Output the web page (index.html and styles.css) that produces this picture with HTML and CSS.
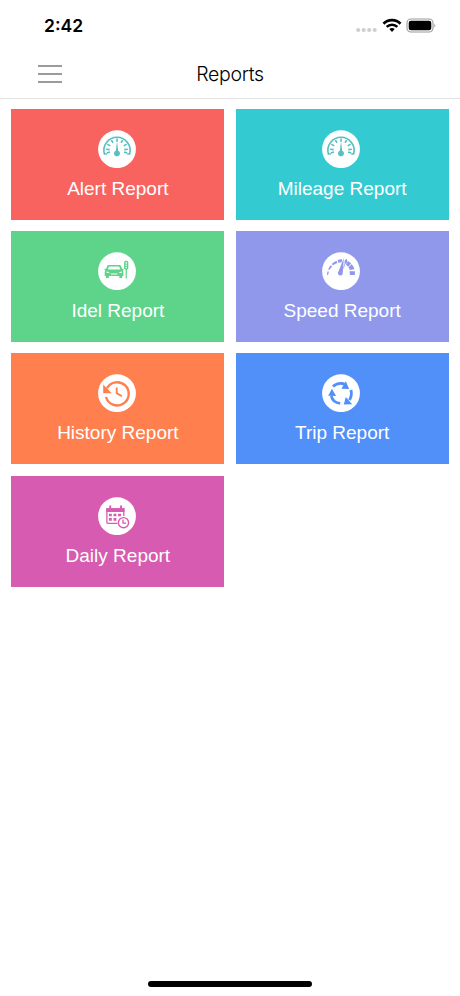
FILE: index.html
```
<!doctype html>
<html lang="en">
  <head>
    <meta charset="utf-8">
    <title>Reports</title>
    <link rel="stylesheet" href="styles.css">
  </head>
  <body>
    <div class="status_bar">
      <span class="time">2:42</span>
      <svg class="status_icons" width="82" height="18" viewBox="0 0 82 18">
        <g fill="#cfcfcf">
          <circle cx="3.2" cy="13" r="2.1"/>
          <circle cx="8.7" cy="13" r="2.1"/>
          <circle cx="14.2" cy="13" r="2.1"/>
          <circle cx="19.7" cy="13" r="2.1"/>
        </g>
        <g fill="none" stroke="#000" stroke-width="2.7">
          <path d="M28.5 6.7a12 12 0 0 1 17 0"/>
          <path d="M31.7 9.9a7.6 7.6 0 0 1 10.6 0"/>
        </g>
        <path d="M34.3 12.1q2.7-2 5.4 0L37 14.9z"/>
        <rect x="52" y="2" width="26" height="13" rx="4" fill="#fff" stroke="#999" stroke-width="1.1"/>
        <rect x="53.7" y="3.8" width="22.6" height="9.5" rx="2.3"/>
        <path d="M79.4 6.5q1.8 2 0 4z" fill="#999"/>
      </svg>
    </div>

    <header class="nav_bar">
      <button class="menu" aria-label="Menu"><i></i><i></i><i></i></button>
      <h1>Reports</h1>
    </header>

    <main class="reports">
      <a class="report alert">
        <svg class="icon" viewBox="6 6 38 38">
          <circle cx="25" cy="25.2" r="18.9" fill="#fff"/>
          <g fill="none" stroke="#55bfc1" stroke-width="1.6">
            <path d="M14.8 30H12.4A13.1 13.1 0 1 1 37.6 30H35.2"/>
            <path d="M25 14.4v3.4M19.3 16.1l1.7 2.7M30.7 16.1l-1.7 2.7M15.3 20.1l3 1.8M34.7 20.1l-3 1.8M14.2 25.2l3.5.4M35.8 25.2l-3.5.4M14.8 29.1l3.2-1M35.2 29.1l-3.2-1"/>
          </g>
          <path d="M25 17.5l1.2 9.2a3 3 0 1 1-2.4 0z" fill="#55bfc1"/>
        </svg>
        <span>Alert Report</span>
      </a>
      <a class="report mileage">
        <svg class="icon" viewBox="6 6 38 38">
          <circle cx="25" cy="25.2" r="18.9" fill="#fff"/>
          <g fill="none" stroke="#55bfc1" stroke-width="1.6">
            <path d="M14.8 30H12.4A13.1 13.1 0 1 1 37.6 30H35.2"/>
            <path d="M25 14.4v3.4M19.3 16.1l1.7 2.7M30.7 16.1l-1.7 2.7M15.3 20.1l3 1.8M34.7 20.1l-3 1.8M14.2 25.2l3.5.4M35.8 25.2l-3.5.4M14.8 29.1l3.2-1M35.2 29.1l-3.2-1"/>
          </g>
          <path d="M25 17.5l1.2 9.2a3 3 0 1 1-2.4 0z" fill="#55bfc1"/>
        </svg>
        <span>Mileage Report</span>
      </a>
      <a class="report idel">
        <svg class="icon" viewBox="6 6 38 38">
          <circle cx="25" cy="25.2" r="18.9" fill="#fff"/>
          <!-- car -->
          <path fill="currentColor" fill-rule="evenodd" d="M16.5 19h11.2q1 0 1.3 1l1.1 3 1.4-.5v1.7l-.7.3q.6.8.6 2V30h-1.2v1.9h-2.9V30H16.8v1.9h-2.9V30h-1.2v-3.5q0-1.2.7-2l-.8-.3v-1.7l1.5.5 1.1-3q.3-1 1.3-1zM17 20.4l-1.1 3.1h12.4l-1.2-3.1zM14.7 25.3v1.8h3.3zM29.6 25.3l-3.3 1.8h3.3zM18.8 27.4v1h6.6v-1z"/>
          <!-- traffic light -->
          <rect x="32.1" y="14.8" width="4.2" height="8.8" rx="1.5" fill="currentColor"/>
          <path d="M34.2 23v9.5" stroke="currentColor" stroke-width="1.2"/>
          <g fill="#fff">
            <circle cx="34.2" cy="16.9" r=".8"/>
            <circle cx="34.2" cy="19.2" r=".8"/>
            <circle cx="34.2" cy="21.5" r=".8"/>
          </g>
        </svg>
        <span>Idel Report</span>
      </a>
      <a class="report speed">
        <svg class="icon" viewBox="6 6 38 38">
          <circle cx="25" cy="25.2" r="18.9" fill="#fff"/>
          <g fill="currentColor">
            <path d="M11 29q0-2 .7-3.7l1.3.4q-.8 1.5-.9 3.3z"/>
            <path d="M12.1 23.4q.9-2.2 2.7-4.2l1.4 1.2q-1.8 1.6-2.7 3.4z"/>
            <path d="M15.7 18q2.1-2 4.7-3.2l1 2.2q-2.500.8-4.300 2.300z"/>
            <path d="M21.6 14.1q2.3-.9 4.5-.8l-.3 2.900q-1.800-.1-3.400.5z"/>
            <path d="M29 13.5l2.5.9-1.2 3.500-1.900-.9z"/>
            <path d="M32 15l3.2 2.5-3.1 3.300-2.100-2z"/>
            <path d="M35.7 18.3q2 2.2 2.7 5l-4.7.7q-.4-1.500-1.300-2.700z"/>
            <path d="M33.4 25.2h5.5V29h-5q0-2-.5-3.800z"/>
            <path d="M27.8 12l-1 14.400a2.500 2.500 0 1 1-4.100-1.300z"/>
            <path d="M30.2 12.8l.7.2-3.200 9.500-.6-.2z"/>
          </g>
        </svg>
        <span>Speed Report</span>
      </a>
      <a class="report history">
        <svg class="icon" viewBox="6 6 38 38">
          <circle cx="25" cy="25.2" r="18.9" fill="#fff"/>
          <g fill="none" stroke="currentColor">
            <path d="M15 20.200A11.600 11.600 0 1 1 14 29" stroke-width="2.400"/>
            <path d="M24.700 19.600v5.500l5.200 3.200" stroke-width="1.900"/>
          </g>
          <path d="M11.200 16.500v8.800h8.600z" fill="currentColor"/>
        </svg>
        <span>History Report</span>
      </a>
      <a class="report trip">
        <svg class="icon" viewBox="6 6 38 38">
          <circle cx="25" cy="25.2" r="18.9" fill="#fff"/>
          <g fill="none" stroke="currentColor" stroke-width="2.800">
            <path d="M17 18.600q3.500-3.500 8.500-3.100 1.700.1 3 .8"/>
            <path d="M34.900 22q1.500 5-1.400 10"/>
            <path d="M15.300 28q1.500 6.700 8.900 7.300"/>
          </g>
          <g fill="currentColor">
            <path d="M29.800 13.200l3.300 7.700-7.700-.2z"/>
            <path d="M27.800 36.600l2-7.600 6.400 7.300z"/>
            <path d="M12.200 27.800l3.700-7 4.200 7.200z"/>
          </g>
        </svg>
        <span>Trip Report</span>
      </a>
      <a class="report daily">
        <svg class="icon" viewBox="6 6 38 38">
          <circle cx="25" cy="25.2" r="18.9" fill="#fff"/>
          <g fill="none" stroke="currentColor">
            <path d="M25.5 32.300H15.700q-.8 0-.8-.8V17.900h16.900v7" stroke-width="1.300"/>
            <path d="M18.200 14.500v3.300M29 14.500v3.300" stroke-width="1.900"/>
            <circle cx="31.500" cy="31.700" r="5.100" stroke-width="1.400"/>
            <path d="M31 28.500v3.600h3.200" stroke-width="1.300"/>
          </g>
          <path d="M14.300 17.300h18.200v3.700H14.300zM16.900 22.700h2.900v2.600h-2.900zM21.500 22.700h2.900v2.600h-2.900zM26.100 22.700H29v2.600h-2.900zM16.900 27.100h2.900v2.600h-2.900zM21.500 27.100h2.900v2.600h-2.900z" fill="currentColor"/>
        </svg>
        <span>Daily Report</span>
      </a>
    </main>

    <div class="home_indicator"></div>
  </body>
</html>
```

FILE: styles.css
```
* {
  box-sizing: border-box;
}

body {
  margin: 0;
  height: 996px;
  display: flex;
  flex-direction: column;
  background-color: white;
  font-family: "Liberation Sans", Arial, sans-serif;
}

.status_bar {
  height: 50px;
  padding: 0 23px 0 44px;
  display: flex;
  align-items: center;
  justify-content: space-between;
}

.status_icons {
  margin-top: 1px;
}

.time {
  font-family: Inter, sans-serif;
  font-size: 17.5px;
  font-weight: 600;
}

.nav_bar {
  height: 49px;
  padding: 0 38px;
  display: grid;
  grid-template-columns: 24px 1fr 24px;
  align-items: center;
  border-bottom: 1px solid #e2e2e2;
}

.menu {
  height: 18px;
  padding: 0;
  border: none;
  background-color: transparent;
  display: flex;
  flex-direction: column;
  justify-content: space-between;
}

.menu i {
  width: 100%;
  height: 2px;
  background-color: #9b9b9b;
}

h1 {
  margin: 0 0 1px;
  text-align: center;
  font-family: Inter, sans-serif;
  font-size: 19.5px;
  font-weight: 300;
  letter-spacing: -0.3px;
}

.reports {
  padding: 10px 11.3px;
  display: grid;
  grid-template-columns: 1fr 1fr;
  grid-auto-rows: 111px;
  gap: 11.2px;
}

.report {
  padding-top: 21px;
  display: flex;
  flex-direction: column;
  align-items: center;
  font-size: 19px;
}

.report span {
  margin-top: 10px;
  line-height: 22px;
  color: white;
}

.icon {
  width: 38px;
  height: 38px;
  margin-right: 2px;
}

.alert {
  background-color: #f9635f;
  color: #f9635f;
}

.mileage {
  background-color: #33cbd1;
  color: #33cbd1;
}

.idel {
  background-color: #5dd48a;
  color: #5dd48a;
}

.speed {
  background-color: #8f98eb;
  color: #8f98eb;
}

.history {
  background-color: #ff804e;
  color: #ff804e;
}

.trip {
  background-color: #5090f8;
  color: #5090f8;
}

.daily {
  background-color: #d75bb0;
  color: #d75bb0;
}

.home_indicator {
  width: 164px;
  height: 6px;
  margin: auto auto 9px;
  border-radius: 3px;
  background-color: black;
}
```
